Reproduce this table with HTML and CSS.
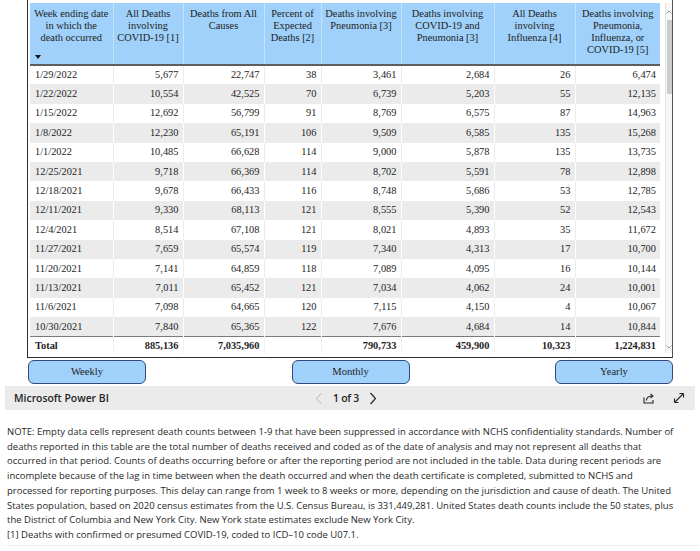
FILE: index.html
```html
<!DOCTYPE html>
<html lang="en">
<head>
<meta charset="utf-8">
<title>Provisional Death Counts – Power BI</title>
<link rel="stylesheet" href="styles.css">
</head>
<body>
<div class="report">
  <div class="frame">
    <div class="table-wrap">
      <table class="grid">
        <colgroup>
          <col style="width:83px"><col style="width:70px"><col style="width:81px"><col style="width:57px">
          <col style="width:80px"><col style="width:93px"><col style="width:81px"><col style="width:85px">
        </colgroup>
        <thead>
          <tr>
            <th class="first">Week ending date<br>in which the<br>death occurred<span class="sort"></span></th>
            <th>All Deaths<br>involving<br>COVID-19 [1]</th>
            <th>Deaths from All<br>Causes</th>
            <th>Percent of<br>Expected<br>Deaths [2]</th>
            <th>Deaths involving<br>Pneumonia [3]</th>
            <th>Deaths involving<br>COVID-19 and<br>Pneumonia [3]</th>
            <th>All Deaths<br>involving<br>Influenza [4]</th>
            <th class="last">Deaths involving<br>Pneumonia,<br>Influenza, or<br>COVID-19 [5]</th>
          </tr>
        </thead>
        <tbody>
          <tr><td>1/29/2022</td><td>5,677</td><td>22,747</td><td>38</td><td>3,461</td><td>2,684</td><td>26</td><td>6,474</td></tr>
          <tr><td>1/22/2022</td><td>10,554</td><td>42,525</td><td>70</td><td>6,739</td><td>5,203</td><td>55</td><td>12,135</td></tr>
          <tr><td>1/15/2022</td><td>12,692</td><td>56,799</td><td>91</td><td>8,769</td><td>6,575</td><td>87</td><td>14,963</td></tr>
          <tr><td>1/8/2022</td><td>12,230</td><td>65,191</td><td>106</td><td>9,509</td><td>6,585</td><td>135</td><td>15,268</td></tr>
          <tr><td>1/1/2022</td><td>10,485</td><td>66,628</td><td>114</td><td>9,000</td><td>5,878</td><td>135</td><td>13,735</td></tr>
          <tr><td>12/25/2021</td><td>9,718</td><td>66,369</td><td>114</td><td>8,702</td><td>5,591</td><td>78</td><td>12,898</td></tr>
          <tr><td>12/18/2021</td><td>9,678</td><td>66,433</td><td>116</td><td>8,748</td><td>5,686</td><td>53</td><td>12,785</td></tr>
          <tr><td>12/11/2021</td><td>9,330</td><td>68,113</td><td>121</td><td>8,555</td><td>5,390</td><td>52</td><td>12,543</td></tr>
          <tr><td>12/4/2021</td><td>8,514</td><td>67,108</td><td>121</td><td>8,021</td><td>4,893</td><td>35</td><td>11,672</td></tr>
          <tr><td>11/27/2021</td><td>7,659</td><td>65,574</td><td>119</td><td>7,340</td><td>4,313</td><td>17</td><td>10,700</td></tr>
          <tr><td>11/20/2021</td><td>7,141</td><td>64,859</td><td>118</td><td>7,089</td><td>4,095</td><td>16</td><td>10,144</td></tr>
          <tr><td>11/13/2021</td><td>7,011</td><td>65,452</td><td>121</td><td>7,034</td><td>4,062</td><td>24</td><td>10,001</td></tr>
          <tr><td>11/6/2021</td><td>7,098</td><td>64,665</td><td>120</td><td>7,115</td><td>4,150</td><td>4</td><td>10,067</td></tr>
          <tr><td>10/30/2021</td><td>7,840</td><td>65,365</td><td>122</td><td>7,676</td><td>4,684</td><td>14</td><td>10,844</td></tr>
        </tbody>
        <tfoot>
          <tr><td>Total</td><td>885,136</td><td>7,035,960</td><td></td><td>790,733</td><td>459,900</td><td>10,323</td><td>1,224,831</td></tr>
        </tfoot>
      </table>
    </div>
    <div class="scrollbar">
      <svg class="sb-arrow" width="6" height="4" viewBox="0 0 6 4"><polyline points="0.5,3.5 3,1 5.5,3.5" fill="none" stroke="#9a9a9a" stroke-width="1"/></svg>
      <div class="sb-track"><div class="sb-thumb"></div></div>
      <svg class="sb-arrow" width="6" height="4" viewBox="0 0 6 4"><polyline points="0.5,0.5 3,3 5.5,0.5" fill="none" stroke="#9a9a9a" stroke-width="1"/></svg>
    </div>
  </div>
  <div class="buttons">
    <div class="btn">Weekly</div>
    <div class="btn">Monthly</div>
    <div class="btn">Yearly</div>
  </div>
</div>

<div class="pbi-bar">
  <div class="brand">Microsoft Power BI</div>
  <div class="pager">
    <svg width="8" height="13" viewBox="0 0 8 13"><polyline points="6.5,1 1.5,6.5 6.5,12" fill="none" stroke="#c2c2c2" stroke-width="1.1"/></svg>
    <span class="pages">1 of 3</span>
    <svg width="8" height="13" viewBox="0 0 8 13"><polyline points="1.5,1 6.5,6.5 1.5,12" fill="none" stroke="#252423" stroke-width="1.2"/></svg>
  </div>
  <div class="tools">
    <svg width="12" height="12" viewBox="0 0 12 12"><path d="M1 5.5 V11 H10 V8" fill="none" stroke="#252423" stroke-width="1.1"/><path d="M3.5 8.5 C3.5 5.5 5.5 4 9.5 4" fill="none" stroke="#252423" stroke-width="1.1"/><polyline points="7.5,1.8 10,4 7.5,6.2" fill="none" stroke="#252423" stroke-width="1.1"/></svg>
    <svg width="12" height="12" viewBox="0 0 12 12"><path d="M1.5 10.5 L10.5 1.5 M1.5 10.5 V6.5 M1.5 10.5 H5.5 M10.5 1.5 H6.5 M10.5 1.5 V5.5" fill="none" stroke="#252423" stroke-width="1.1"/></svg>
  </div>
</div>

<div class="note">
  <p>NOTE: Empty data cells represent death counts between 1-9 that have been suppressed in accordance with NCHS confidentiality standards. Number of<br>deaths reported in this table are the total number of deaths received and coded as of the date of analysis and may not represent all deaths that<br>occurred in that period. Counts of deaths occurring before or after the reporting period are not included in the table. Data during recent periods are<br>incomplete because of the lag in time between when the death occurred and when the death certificate is completed, submitted to NCHS and<br>processed for reporting purposes. This delay can range from 1 week to 8 weeks or more, depending on the jurisdiction and cause of death. The United<br>States population, based on 2020 census estimates from the U.S. Census Bureau, is 331,449,281. United States death counts include the 50 states, plus<br>the District of Columbia and New York City. New York state estimates exclude New York City.</p>
  <p>[1] Deaths with confirmed or presumed COVID-19, coded to ICD–10 code U07.1.</p>
  <p class="cut">[2] Percent of expected deaths is the number of deaths for all causes for this week in 2022 compared to the average number across the same week in 2017–2019.</p>
</div>
</body>
</html>
```

FILE: styles.css
```css
html, body {
  margin: 0;
  padding: 0;
  background: #ffffff;
}
body {
  width: 700px;
  height: 551px;
  overflow: hidden;
}

.report {
  padding: 0 27px 0 27px;
}

.frame {
  display: flex;
  height: 358px;
  box-sizing: border-box;
  border-left: 1px solid #2c2c2c;
  border-right: 1px solid #555555;
  border-bottom: 1px solid #2c2c2c;
  overflow: hidden;
}

.table-wrap {
  padding: 3px 0 0 2px;
  width: 630px;
  flex: none;
}

.grid {
  border-collapse: collapse;
  table-layout: fixed;
  width: 630px;
  font-family: "Liberation Serif", "Times New Roman", serif;
  font-size: 10.4px;
  line-height: 12px;
  color: #1e1e1e;
}

.grid th {
  background: #a0d1fa;
  height: 62px;
  box-sizing: border-box;
  padding: 5px 2px 0;
  vertical-align: top;
  text-align: center;
  font-weight: normal;
  white-space: nowrap;
  border-right: 1px solid #c3e2fc;
  border-bottom: 2px solid #5e5e5e;
  position: relative;
  color: #222222;
}
.grid th.last {
  border-right: none;
}

.sort {
  position: absolute;
  left: 5px;
  bottom: 5px;
  width: 0;
  height: 0;
  border-left: 3.5px solid transparent;
  border-right: 3.5px solid transparent;
  border-top: 4px solid #111111;
}

.grid tbody tr {
  height: 19.4px;
}
.grid td {
  padding: 0 4px 0 4px;
  text-align: right;
  white-space: nowrap;
  border-right: 1px solid #ececec;
}
.grid td:first-child {
  text-align: left;
  padding-left: 5px;
}
.grid td:last-child {
  border-right: none;
}
.grid tbody tr:nth-child(even) td {
  background: #ebebeb;
  border-right-color: #ffffff;
}
.grid tbody tr:nth-child(even) td:last-child {
  border-right: none;
}

.grid tfoot tr {
  height: 17.6px;
}
.grid tfoot td {
  font-weight: bold;
  border-top: 1px solid #7a7a7a;
  border-right-color: #f2f2f2;
}

.scrollbar {
  flex: none;
  width: 7px;
  margin-left: 5px;
  padding-top: 3px;
  display: flex;
  flex-direction: column;
  align-items: center;
  border-left: 1px solid #e2e2e2;
  background: #f7f7f7;
  height: 350px;
  margin-top: 3px;
  box-sizing: border-box;
}
.sb-arrow {
  flex: none;
  margin: 4px 0 4px;
}
.sb-track {
  flex: 1;
  width: 100%;
  padding-top: 2px;
}
.sb-thumb {
  width: 5px;
  margin: 0 auto;
  height: 74px;
  background: #cccccc;
}

.buttons {
  display: flex;
  justify-content: space-between;
  padding-left: 1px;
  margin-top: 2px;
}
.btn {
  width: 118px;
  height: 24px;
  box-sizing: border-box;
  border: 1px solid #34497a;
  border-radius: 6px;
  background: #a0d1fa;
  font-family: "Liberation Serif", "Times New Roman", serif;
  font-size: 10.6px;
  line-height: 22px;
  text-align: center;
  color: #1e1e1e;
}

.pbi-bar {
  margin: 2px 5px 0;
  height: 24px;
  background: #ebebeb;
  display: grid;
  grid-template-columns: 1fr auto 1fr;
  align-items: center;
  padding: 0 9px;
  font-family: "Open Sans", "Noto Sans", sans-serif;
  font-weight: 600;
  font-size: 10.4px;
  color: #252423;
}
.pager {
  display: flex;
  align-items: center;
  gap: 10px;
  margin-left: -8px;
}
.pager .pages {
  letter-spacing: -0.2px;
}
.tools {
  display: flex;
  justify-content: flex-end;
  gap: 18px;
  padding-right: 1px;
}

.note {
  padding: 0 2px 0 7px;
  margin-top: 15px;
  font-family: "Open Sans", "Noto Sans", sans-serif;
  font-size: 9.5px;
  line-height: 14.7px;
  color: #1f1f1f;
  white-space: nowrap;
}
.note p {
  margin: 0;
}
.note p.cut {
  white-space: normal;
  border-top: 1px solid #ededed;
  margin-top: 2px;
  padding-top: 3px;
}
```
